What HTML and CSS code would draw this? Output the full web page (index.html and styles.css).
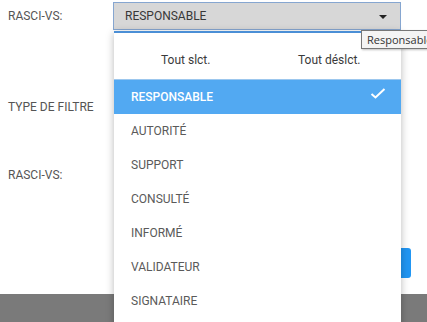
FILE: index.html
```html
<!DOCTYPE html>
<html lang="fr">
<head>
  <meta charset="UTF-8" />
  <title>Filtre RASCI-VS</title>
  <link rel="stylesheet" href="styles.css">
</head>
<body>

<div class="dialog">
  <div class="row row-first">
    <label class="label">RASCI-VS:</label>
    <div class="select">
      <span>RESPONSABLE</span>
      <span class="caret"></span>
    </div>
  </div>
  <div class="row row-type">
    <label class="label">TYPE DE FILTRE</label>
  </div>
  <div class="row row-rasci">
    <label class="label">RASCI-VS:</label>
  </div>
  <div class="actions">
    <button class="btn">OK</button>
  </div>

  <!-- open dropdown -->
  <div class="dropdown">
    <div class="dropdown-head">
      <a>Tout slct.</a>
      <a>Tout déslct.</a>
    </div>
    <ul class="options">
      <li class="selected">RESPONSABLE
        <svg class="check" width="16" height="12" viewBox="0 0 16 12"><path d="M1.5 6 L5.5 9.5 L14.5 1" fill="none" stroke="#fff" stroke-width="2"/></svg>
      </li>
      <li>AUTORITÉ</li>
      <li>SUPPORT</li>
      <li>CONSULTÉ</li>
      <li>INFORMÉ</li>
      <li>VALIDATEUR</li>
      <li>SIGNATAIRE</li>
    </ul>
  </div>

  <div class="tooltip">Responsable</div>
</div>

<div class="backdrop"></div>

</body>
</html>
```

FILE: styles.css
```css
* { margin: 0; padding: 0; box-sizing: border-box; }
html, body { overflow: hidden; }
body {
  font-family: Roboto, 'Liberation Sans', sans-serif;
  font-size: 12px;
  background: #fff;
  color: #555;
  width: 427px;
  height: 322px;
}
.dialog {
  position: relative;
  height: 294px;
  background: #fff;
}
.row {
  display: flex;
  align-items: center;
}
.label {
  width: 113px;
  padding-left: 8px;
  color: #555;
}
.row-first { padding-top: 1px; height: 30px; }
.row-type { margin-top: 63px; height: 28px; }
.row-rasci { margin-top: 40px; height: 28px; }

.select {
  width: 288px;
  height: 28px;
  background: #d7d7d7;
  border: 1px solid #86a6d0;
  display: flex;
  align-items: center;
  justify-content: space-between;
  padding: 0 13px 0 11px;
  color: #383838;
}
.caret {
  width: 0;
  height: 0;
  border-left: 4px solid transparent;
  border-right: 4px solid transparent;
  border-top: 4px solid #222;
  margin-top: 2px;
}

.actions {
  display: flex;
  justify-content: flex-end;
  margin-top: 59px;
  padding-right: 16px;
}
.btn {
  width: 70px;
  height: 30px;
  border: none;
  border-radius: 3px;
  background: #2196f3;
  color: #fff;
}

.dropdown {
  position: absolute;
  top: 31px;
  left: 114px;
  width: 287px;
  height: 300px;
  background: #fff;
  border-top: 2px solid #4b8fd6;
  box-shadow: 0 2px 8px rgba(0, 0, 0, 0.28);
  z-index: 10;
}
.dropdown-head {
  display: flex;
  height: 47px;
  padding-top: 20px;
  border-bottom: 1px solid #9cc7ee;
  color: #3a3a3a;
}
.dropdown-head a {
  flex: 1;
  text-align: center;
}
.options { list-style: none; }
.options li {
  height: 34px;
  display: flex;
  align-items: center;
  justify-content: space-between;
  padding: 0 15px 0 17px;
  color: #5a5a5a;
}
.options li.selected {
  background: #52a9f2;
  color: #fff;
  font-weight: 500;
}
.check { margin-top: -6px; }

.tooltip {
  position: absolute;
  top: 30px;
  left: 361px;
  height: 19px;
  padding: 1px 5px;
  white-space: nowrap;
  background: #f4f4f4;
  border: 1px solid #777;
  box-shadow: 1px 1px 2px rgba(0, 0, 0, 0.25);
  font-family: 'Open Sans', 'DejaVu Sans', sans-serif;
  font-size: 11px;
  color: #333;
  z-index: 20;
}

.backdrop {
  height: 28px;
  background: #7a7a7a;
}
```
